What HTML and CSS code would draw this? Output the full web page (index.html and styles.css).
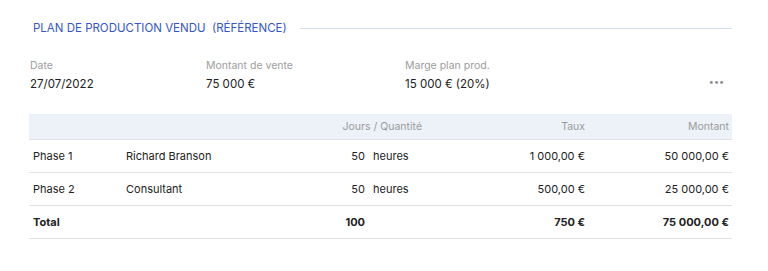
FILE: index.html
```html
<!DOCTYPE html>
<html lang="fr">
<head>
<meta charset="utf-8">
<link rel="stylesheet" href="styles.css">
</head>
<body>
<section class="panel">
  <div class="title-row">
    <h2 class="title">PLAN DE PRODUCTION VENDU&nbsp; (RÉFÉRENCE)</h2>
    <div class="title-line"></div>
  </div>
  <div class="info">
    <div class="info-item w-date">
      <div class="label">Date</div>
      <div class="value">27/07/2022</div>
    </div>
    <div class="info-item w-vente">
      <div class="label">Montant de vente</div>
      <div class="value">75 000 €</div>
    </div>
    <div class="info-item w-marge">
      <div class="label">Marge plan prod.</div>
      <div class="value">15 000 € (20%)</div>
    </div>
    <div class="more">•••</div>
  </div>
  <table class="grid">
    <colgroup>
      <col class="c1"><col class="c2"><col class="c3"><col class="c4"><col class="c5">
    </colgroup>
    <thead>
      <tr>
        <th></th>
        <th></th>
        <th class="r">Jours / Quantité</th>
        <th class="r">Taux</th>
        <th class="r">Montant</th>
      </tr>
    </thead>
    <tbody>
      <tr>
        <td>Phase 1</td>
        <td>Richard Branson</td>
        <td><div class="qty"><span class="num">50</span><span class="unit">heures</span></div></td>
        <td class="r">1 000,00 €</td>
        <td class="r">50 000,00 €</td>
      </tr>
      <tr>
        <td>Phase 2</td>
        <td>Consultant</td>
        <td><div class="qty"><span class="num">50</span><span class="unit">heures</span></div></td>
        <td class="r">500,00 €</td>
        <td class="r">25 000,00 €</td>
      </tr>
      <tr class="total">
        <td>Total</td>
        <td></td>
        <td><div class="qty"><span class="num">100</span><span class="unit"></span></div></td>
        <td class="r">750 €</td>
        <td class="r">75 000,00 €</td>
      </tr>
    </tbody>
  </table>
</section>
</body>
</html>
```
FILE: styles.css
```css
* { box-sizing: border-box; }
html, body { margin: 0; background: #fff; }
body {
  font-family: Inter, "Noto Sans", sans-serif;
  color: #222;
  font-size: 11px;
}
.panel {
  padding: 19px 36px 0 29px;
}
.title-row {
  display: flex;
  align-items: center;
  gap: 13px;
  height: 18px;
  padding-left: 4px;
}
.title {
  margin: 0;
  font-size: 11.5px;
  font-weight: 400;
  color: #3557c6;
  white-space: nowrap;
}
.title-line {
  flex: 1;
  height: 1px;
  background: #d5ddf2;
}
.info {
  display: flex;
  align-items: flex-end;
  margin-top: 22px;
  padding-left: 1px;
}
.info-item { display: flex; flex-direction: column; gap: 3px; }
.w-date { width: 176px; }
.w-vente { width: 199px; }
.w-marge { flex: 1; }
.label { font-size: 10.5px; color: #9d9d9d; line-height: 14px; }
.value { font-size: 11.5px; color: #222; line-height: 16px; }
.more {
  font-size: 9px;
  color: #8c8c8c;
  padding-right: 8px;
  padding-bottom: 3px;
  line-height: 14px;
}
.grid {
  margin-top: 22px;
  width: 703px;
  border-collapse: collapse;
  table-layout: fixed;
}
.c1 { width: 93px; }
.c2 { width: 138px; }
.c3 { width: 165px; }
.c4 { width: 163px; }
.c5 { width: 144px; }
th {
  background: #edf2f9;
  height: 25px;
  font-size: 10.5px;
  font-weight: 400;
  color: #9a9a9a;
  padding: 0 3px 0 4px;
  border-bottom: 1px solid #dde3ec;
}
td {
  height: 33px;
  padding: 0 3px 0 4px;
  font-size: 11px;
  color: #222;
  border-bottom: 1px solid #e2e2e2;
  white-space: nowrap;
}
.r { text-align: right; }
.qty { display: flex; justify-content: flex-end; }
.num { text-align: right; }
.unit { width: 57px; padding-left: 8px; }
.total td { font-weight: 700; }
```
